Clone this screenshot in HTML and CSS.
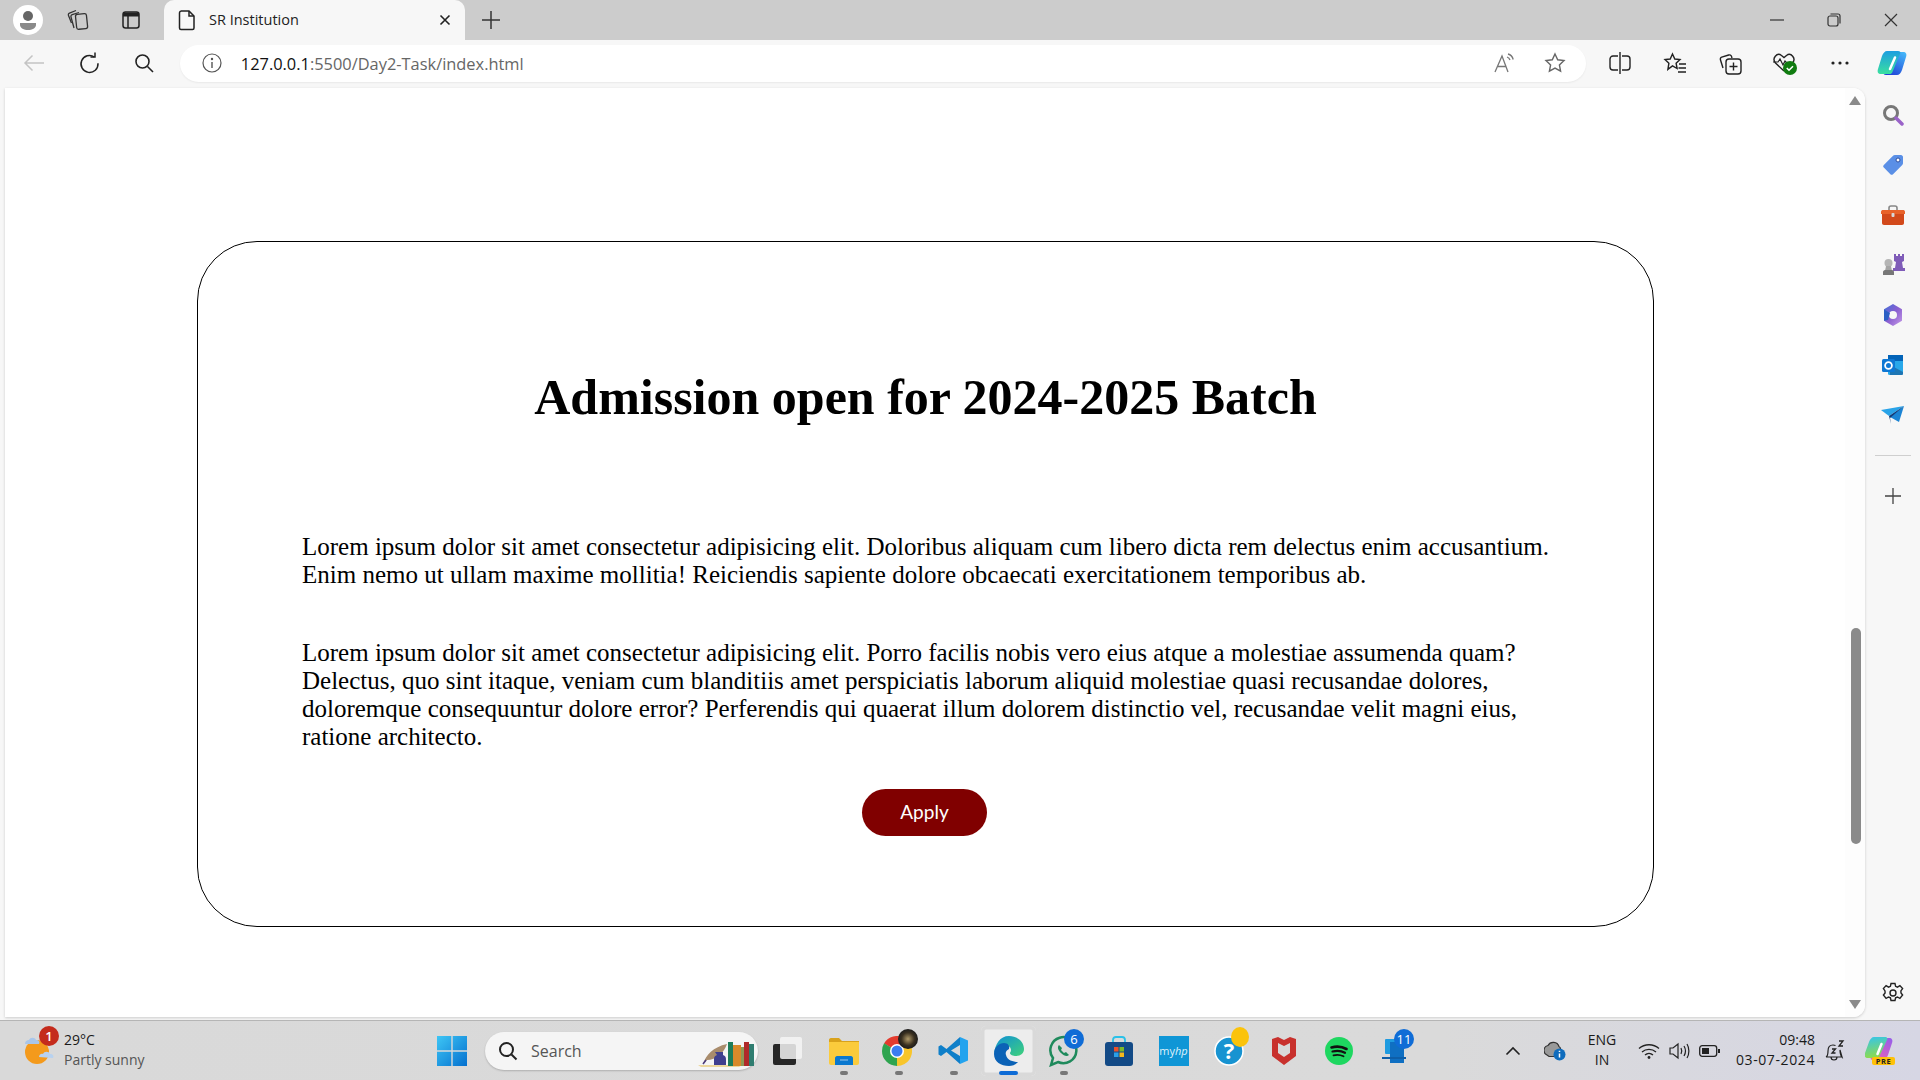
FILE: index.html
```html
<!DOCTYPE html>
<html lang="en">
<head>
  <meta charset="UTF-8">
  <title>SR Institution</title>
  <link rel="stylesheet" href="styles.css">
</head>
<body>
  <!-- title bar -->
  <div class="titlebar">
    <div class="tb-btn profile">
      <svg width="30" height="30" viewBox="0 0 30 30"><circle cx="15" cy="15" r="15" fill="#fff"/><circle cx="15" cy="11" r="5" fill="#666"/><path d="M7 18h16v2c0 3-4 5-8 5s-8-2-8-5z" fill="#8a8a8a"/></svg>
    </div>
    <div class="tb-btn">
      <svg width="24" height="24" viewBox="0 0 24 24" fill="none" stroke="#333" stroke-width="1.300"><rect x="10" y="6" width="11" height="15" rx="2" transform="rotate(-6 15 13)"/><path d="M8 20 5 9c-.3-1 .2-2 1.200-2.300L13 4.500"/><path d="M5.500 15 2.500 7.500c-.4-1 0-2 1-2.400L10 2.500"/></svg>
    </div>
    <div class="tb-btn">
      <svg width="20" height="20" viewBox="0 0 20 20" fill="none" stroke="#222" stroke-width="1.500"><rect x="2" y="2" width="16" height="16" rx="2.500"/><path d="M2 4.500h16" stroke-width="4"/><path d="M7 6v12"/></svg>
    </div>
    <div class="tab">
      <svg width="18" height="22" viewBox="0 0 18 22" fill="none" stroke="#222" stroke-width="1.500"><path d="M3 2h8l5 5v12a1.500 1.500 0 0 1-1.500 1.500h-11.500a1.500 1.500 0 0 1-1.500-1.500v-15a2 2 0 0 1 2-2z"/><path d="M11 2v5h5"/></svg>
      <span class="tab-title">SR Institution</span>
      <svg width="12" height="12" viewBox="0 0 12 12" stroke="#222" stroke-width="1.600"><path d="M1.500 1.500l9 9M10.500 1.500l-9 9"/></svg>
    </div>
    <div class="new-tab">
      <svg width="20" height="20" viewBox="0 0 20 20" stroke="#333" stroke-width="1.500"><path d="M10 1v18M1 10h18"/></svg>
    </div>
    <div class="win-controls">
      <div class="win-btn"><svg width="14" height="14" viewBox="0 0 14 14" stroke="#333" stroke-width="1.200"><path d="M0 7h14"/></svg></div>
      <div class="win-btn"><svg width="14" height="14" viewBox="0 0 14 14" fill="none" stroke="#333" stroke-width="1.200"><rect x="1" y="3" width="10" height="10" rx="2"/><path d="M3.500 1h7.500a2 2 0 0 1 2 2v7.500"/></svg></div>
      <div class="win-btn"><svg width="14" height="14" viewBox="0 0 14 14" stroke="#333" stroke-width="1.200"><path d="M1 1l12 12M13 1l-12 12"/></svg></div>
    </div>
  </div>

  <!-- address bar -->
  <div class="toolbar">
    <div class="nav-btn">
      <svg width="22" height="18" viewBox="0 0 22 18" fill="none" stroke="#c4c4c4" stroke-width="1.500"><path d="M21 9h-19M9.500 1.500 2 9l7.500 7.500"/></svg>
    </div>
    <div class="nav-btn">
      <svg class="reload" width="22" height="22" viewBox="0 0 22 22" fill="none" stroke="#222" stroke-width="1.500"><path d="M19 11.300A8.500 8.500 0 1 1 15.400 5"/><path d="M16 .5v4.500h-4.500"/></svg>
    </div>
    <div class="nav-btn">
      <svg width="20" height="20" viewBox="0 0 20 20" fill="none" stroke="#222" stroke-width="1.600"><circle cx="8.500" cy="8.500" r="6.500"/><path d="M13.500 13.500 19 19"/></svg>
    </div>
    <div class="url-bar">
      <svg class="url-info" width="20" height="20" viewBox="0 0 20 20" fill="none" stroke="#555" stroke-width="1.200"><circle cx="10" cy="10" r="9"/><path d="M10 9v6" stroke-width="1.400"/><circle cx="10" cy="6" r=".6" fill="#555"/></svg>
      <span class="url-text"><span class="url-host">127.0.0.1</span>:5500/Day2-Task/index.html</span>
      <div class="url-actions">
        <svg width="22" height="20" viewBox="0 0 22 20" fill="none" stroke="#777" stroke-width="1.300"><path d="M1 19 8 3l6 16M3.500 13.500h9"/><path d="M13 4c1.500 .5 2.500 1.500 3 3M14 1c2.500 .7 4.500 2.700 5.200 5.500"/></svg>
        <svg width="22" height="22" viewBox="0 0 22 22" fill="none" stroke="#666" stroke-width="1.400"><path d="m11 2 2.700 5.800 6.300.8-4.600 4.300 1.200 6.300-5.600-3.100-5.600 3.100 1.200-6.300-4.600-4.300 6.300-.8z"/></svg>
      </div>
    </div>
    <div class="tools">
      <div class="tool">
        <svg width="22" height="24" viewBox="0 0 22 24" fill="none" stroke="#222" stroke-width="1.400"><path d="M9 5h-5a3 3 0 0 0-3 3v8a3 3 0 0 0 3 3h5M13 5h5a3 3 0 0 1 3 3v8a3 3 0 0 1-3 3h-5M11 1v22"/></svg>
      </div>
      <div class="tool">
        <svg width="24" height="24" viewBox="0 0 24 24" fill="none" stroke="#222" stroke-width="1.400"><path d="m9.500 3 2.300 5 5.200.6-3.900 3.600 1 5.300-4.600-2.600-4.600 3.500 1-6.200-3.900-3.600 5.200-.6z"/><path d="M16 13h7M15.500 17h7.500M15 21h8"/></svg>
      </div>
      <div class="tool">
        <svg width="24" height="24" viewBox="0 0 24 24" fill="none" stroke="#222" stroke-width="1.400"><rect x="8" y="8" width="15" height="15" rx="3"/><path d="M15.500 11.500v8M11.500 15.500h8M5 17l-2.500-8c-.4-1.200 0-2.400 1.200-2.800l7-2.200c1.200-.4 2.400.2 2.800 1.400l.5 1.600"/></svg>
      </div>
      <div class="tool">
        <svg width="26" height="26" viewBox="0 0 26 26" fill="none"><path d="M12 21 3.500 13c-4-4.500 1.500-11 6-7.500L12 7.500l2.500-2c4.500-3.500 10 3 6 7.500" stroke="#222" stroke-width="1.400"/><path d="M1 12h5l2-3 3 6 2-4 2 2h3" stroke="#222" stroke-width="1.200"/><circle cx="18" cy="18" r="7" fill="#107c10"/><path d="m14.800 18 2.200 2.200 4-4" stroke="#fff" stroke-width="1.600"/></svg>
      </div>
      <div class="tool">
        <svg width="18" height="4" viewBox="0 0 18 4" fill="#222"><circle cx="2" cy="2" r="1.600"/><circle cx="9" cy="2" r="1.600"/><circle cx="16" cy="2" r="1.600"/></svg>
      </div>
      <div class="tool tool-copilot">
        <svg width="30" height="30" viewBox="0 0 30 30"><defs><linearGradient id="cpA" x1="0.3" y1="0" x2="0.3" y2="1"><stop offset="0" stop-color="#1c9ee0"/><stop offset="1" stop-color="#3ae0a0"/></linearGradient><linearGradient id="cpB" x1="0.8" y1="0" x2="0.2" y2="1"><stop offset="0" stop-color="#44b4f8"/><stop offset="1" stop-color="#1f3fd6"/></linearGradient></defs><path d="M20 27H9c-2 0-3-1-2-3l8-19c1-1 2-1 3-1h8c3 0 4 2 3 5l-4 13c-1 3-3 5-5 5z" fill="url(#cpB)"/><path d="M10 3h11c2 0 3 1 2 3l-8 19c-1 1-2 1-3 1H4c-3 0-4-2-3-5L5 8c1-3 3-5 5-5z" fill="url(#cpA)"/><path d="M18 9.500 13 21" stroke="#fff" stroke-width="2.500" stroke-linecap="round"/></svg>
      </div>
    </div>
  </div>

  <!-- viewport + edge sidebar -->
  <div class="main">
    <div class="viewport">
      <div class="page">
        <div class="card">
          <h1>Admission open for 2024-2025 Batch</h1>
          <p>Lorem ipsum dolor sit amet consectetur adipisicing elit. Doloribus aliquam cum libero dicta rem delectus enim accusantium. Enim nemo ut ullam maxime mollitia! Reiciendis sapiente dolore obcaecati exercitationem temporibus ab.</p>
          <p>Lorem ipsum dolor sit amet consectetur adipisicing elit. Porro facilis nobis vero eius atque a molestiae assumenda quam? Delectus, quo sint itaque, veniam cum blanditiis amet perspiciatis laborum aliquid molestiae quasi recusandae dolores, doloremque consequuntur dolore error? Perferendis qui quaerat illum dolorem distinctio vel, recusandae velit magni eius, ratione architecto.</p>
          <button class="apply-btn">Apply</button>
        </div>
      </div>
      <div class="scrollbar">
        <div class="arrow arrow-up"></div>
        <div class="thumb"></div>
        <div class="arrow arrow-down"></div>
      </div>
    </div>

    <div class="sidebar">
      <div class="side-icon">
        <svg width="22" height="22" viewBox="0 0 22 22" fill="none"><circle cx="9" cy="9" r="6.500" stroke="#777" stroke-width="3"/><path d="m14 14 6 6" stroke="#9a63c9" stroke-width="3.500" stroke-linecap="round"/></svg>
      </div>
      <div class="side-icon">
        <svg width="22" height="22" viewBox="0 0 22 22"><path d="M13 1h6c1 0 2 1 2 2v6c0 1-.4 1.600-1 2.200l-9 9c-.8.800-1.800.800-2.600 0l-6.600-6.600c-.8-.8-.8-1.800 0-2.600l9-9c.6-.6 1.200-1 2.200-1z" fill="#5a8fe6"/><circle cx="16" cy="6" r="2" fill="#fff" stroke="#2c4ea0" stroke-width="1"/></svg>
      </div>
      <div class="side-icon">
        <svg width="24" height="20" viewBox="0 0 24 20"><path d="M8 5V3c0-1 .6-2 2-2h4c1.400 0 2 1 2 2v2" fill="none" stroke="#888" stroke-width="1.600"/><path d="M2 5h20c1 0 2 .6 2 2v2H0V7c0-1.400 1-2 2-2z" fill="#e8622a"/><path d="M1 9h22v9c0 1-.8 2-2 2H3c-1.200 0-2-1-2-2z" fill="#d2491b"/><rect x="10.500" y="8" width="3" height="4" rx="1" fill="#d8d8d8"/></svg>
      </div>
      <div class="side-icon">
        <svg width="24" height="24" viewBox="0 0 24 24"><path d="M14 1h2v2h2V1h2v2h2V1h2v7l-2 1 1 6h2v3H13v-3h2l1-6-2-1z" fill="#7f5cb8" transform="translate(-1 0)"/><circle cx="7.500" cy="10" r="4" fill="#b5b5b5"/><path d="M5 13h5l1 5H4z" fill="#a5a5a5"/><path d="M2 19c0-1 1-2 2-2h7c1 0 2 1 2 2v3H2z" fill="#777"/></svg>
      </div>
      <div class="side-icon">
        <svg width="22" height="24" viewBox="0 0 22 24"><defs><linearGradient id="m3" x1="0" y1="0" x2="1" y2="1"><stop offset="0" stop-color="#3f6fd8"/><stop offset=".5" stop-color="#8a5fd0"/><stop offset="1" stop-color="#c79be8"/></linearGradient></defs><path d="M11 1 20 6.200V17.800L11 23 2 17.800V6.200z" fill="url(#m3)"/><circle cx="11" cy="12" r="4" fill="#f7f7f7"/><path d="M2 6.500 8 10 6 17 2 17.800z" fill="#2b5fc4"/></svg>
      </div>
      <div class="side-icon">
        <svg width="22" height="22" viewBox="0 0 22 22"><rect x="6" y="1" width="15" height="20" rx="1.500" fill="#28a8ea"/><path d="M6 1h15v6H6z" fill="#0364b8"/><path d="M8 11 21 18v2a1 1 0 0 1-1 1H8z" fill="#14447d" opacity=".5"/><rect x="0" y="5" width="13" height="13" rx="1.500" fill="#0f78d4"/><circle cx="6.500" cy="11.500" r="3.400" fill="none" stroke="#fff" stroke-width="1.800"/></svg>
      </div>
      <div class="side-icon">
        <svg width="24" height="20" viewBox="0 0 24 20"><path d="M0 5 23 1 8 11z" fill="#29a3e8"/><path d="M23 1 18 17 9 12z" fill="#1b84d4"/><path d="M8 11 23 1 9 13l1 6z" fill="#0e3a78"/></svg>
      </div>
      <div class="side-divider"></div>
      <div class="side-icon">
        <svg width="16" height="16" viewBox="0 0 16 16" stroke="#444" stroke-width="1.300"><path d="M8 0v16M0 8h16"/></svg>
      </div>
      <div class="side-icon side-gear">
        <svg width="22" height="22" viewBox="0 0 22 22" fill="none" stroke="#222" stroke-width="1.400"><circle cx="11" cy="11" r="3"/><path d="M9 1.500h4l.6 2.800 1.800.8 2.500-1.500 2.700 3-1.700 2.300.1 2 1.600 2.100-2.700 3.400-2.500-1.400-1.800.8-.6 2.700H9l-.6-2.700-1.800-.8-2.500 1.400-2.700-3.400 1.700-2.100-.1-2-1.600-2.300 2.700-3 2.500 1.500 1.800-.8z"/></svg>
      </div>
    </div>
  </div>

  <!-- windows taskbar -->
  <div class="taskbar">
    <div class="weather">
      <div class="weather-icon">
        <svg width="34" height="40" viewBox="0 0 34 40"><circle cx="13" cy="21" r="12" fill="#f49a1c"/><path d="M1 13c0-3 2-4 4-4 1-3 6-3 7 0 3 0 4 2 3 4z" fill="#a9c6ea"/><path d="M15 26c0-2 2-4 4-3 1-3 6-3 7 0 3 0 4 2 3 4z" fill="#b8d2f0"/></svg>
        <span class="weather-badge">1</span>
      </div>
      <div class="weather-text">
        <div class="weather-temp">29°C</div>
        <div class="weather-desc">Partly sunny</div>
      </div>
    </div>

    <div class="start">
      <svg width="30" height="30" viewBox="0 0 30 30"><defs><linearGradient id="win" x1="0" y1="0" x2="1" y2="1"><stop offset="0" stop-color="#3ec6f5"/><stop offset="1" stop-color="#0470cf"/></linearGradient></defs><path d="M0 0h14.300v14.300H0zM15.700 0H30v14.300H15.700zM0 15.700h14.300V30H0zM15.700 15.700H30V30H15.700z" fill="url(#win)"/></svg>
    </div>
    <div class="search-box">
      <svg width="20" height="20" viewBox="0 0 20 20" fill="none" stroke="#222" stroke-width="2"><circle cx="8.500" cy="8.500" r="6.500"/><path d="M13.500 13.500 18.500 18.500"/></svg>
      <span class="search-label">Search</span>
      <svg class="search-art" width="60" height="34" viewBox="0 0 60 34">
        <path d="M2 31h44l-3 2H5z" fill="#ecd79c"/>
        <path d="M7 30c3-9 10-17 24-20-3 9-11 16-20 16z" fill="#a98c6c"/>
        <path d="M7 30 10 26" stroke="#4a3a7a" stroke-width="1.500"/>
        <path d="M19 18h8v3c3 1 3 3 3 5v5H18v-5c0-2 0-4 3-5z" fill="#3f3f8f"/>
        <rect x="32" y="8" width="5" height="24" fill="#1e7d5a"/>
        <rect x="37" y="11" width="8" height="21" fill="#d98a2a"/>
        <rect x="45" y="13" width="3" height="19" fill="#8f9a55"/>
        <rect x="48" y="8" width="5" height="24" fill="#b02a2a"/>
        <rect x="53" y="10" width="5" height="22" fill="#2f7d70"/>
      </svg>
    </div>

    <div class="task-icons">
      <div class="task-icon task-view">
        <svg width="30" height="30" viewBox="0 0 30 30"><rect x="1" y="8" width="23" height="21" rx="2" fill="#262626"/><rect x="8" y="1" width="22" height="22" rx="2" fill="#f5f5f5" opacity=".85"/></svg>
      </div>
      <div class="task-icon running">
        <svg width="30" height="28" viewBox="0 0 30 28"><path d="M0 3c0-1 .6-2 2-2h8l3 3h17v4H0z" fill="#d9a21b"/><path d="M0 5h30v21c0 1-1 2-2 2H2c-1 0-2-1-2-2z" fill="#fbcb3c"/><path d="M6 21c0-1 1-2 2-2h14c1 0 2 1 2 2v7H6z" fill="#0a78cf"/><path d="M11 23h8" stroke="#fff" stroke-width="1" opacity=".6"/></svg>
      </div>
      <div class="task-icon running chrome">
        <svg width="30" height="30" viewBox="0 0 30 30" fill="none"><g stroke-width="9"><circle cx="15" cy="15" r="10.500" stroke="#e33b2e" stroke-dasharray="22 44" transform="rotate(-150 15 15)"/><circle cx="15" cy="15" r="10.500" stroke="#f8c52b" stroke-dasharray="22 44" transform="rotate(-30 15 15)"/><circle cx="15" cy="15" r="10.500" stroke="#2ea44f" stroke-dasharray="22 44" transform="rotate(90 15 15)"/></g><circle cx="15" cy="15" r="7" fill="#fff"/><circle cx="15" cy="15" r="5.500" fill="#3b7cf0"/></svg>
        <span class="avatar-dot"></span>
      </div>
      <div class="task-icon running">
        <svg width="31" height="29" viewBox="0 0 31 29"><path d="M22 1 8.500 13 3 9 .5 10.500v8L3 20l5.500-4L22 28v-8l-9-5.500L22 9z" fill="#0f7fc9"/><path d="M22 1l8 3.500v20L22 28z" fill="#23a3ee"/></svg>
      </div>
      <div class="task-icon active">
        <svg width="32" height="32" viewBox="0 0 32 32"><defs><linearGradient id="edge" x1="0" y1="0" x2="1" y2="1"><stop offset="0" stop-color="#0f8fd8"/><stop offset="1" stop-color="#3fd27a"/></linearGradient></defs><path d="M16 1c9 0 15 6 15 13 0 4-3 7-8 7-3 0-6-1-6-3 0-1 1-1 1-3 0-3-3-5-6-5-5 0-10 4-11 9C2 9 7 1 16 1z" fill="url(#edge)"/><path d="M1 19C1 12 6 8 11 8c4 0 6 3 5 6-2 1-4 3-3 6 1 5 7 7 12 7-3 3-6 4-9 4C8 31 1 27 1 19z" fill="#0b62b6"/></svg>
      </div>
      <div class="task-icon running">
        <svg width="32" height="32" viewBox="0 0 32 32" fill="none"><path d="M3 30l2-7A13 13 0 1 1 10 27z" stroke="#1f8a5c" stroke-width="2.500"/><path d="M11 10c-2 2-1 5 2 8s6 4 8 2l-3-3-2 1-3-3 1-2z" fill="#1f8a5c"/></svg>
        <span class="count-badge">6</span>
      </div>
      <div class="task-icon">
        <svg width="30" height="30" viewBox="0 0 30 30"><path d="M9 7V4c0-2 1-3 3-3h6c2 0 3 1 3 3v3" fill="none" stroke="#2ac1e8" stroke-width="1.800"/><rect x="1" y="6" width="28" height="24" rx="3" fill="#134a86"/><rect x="10" y="11" width="4.500" height="4.500" fill="#e8512a"/><rect x="15.500" y="11" width="4.500" height="4.500" fill="#7cb82a"/><rect x="10" y="16.500" width="4.500" height="4.500" fill="#2a9fe8"/><rect x="15.500" y="16.500" width="4.500" height="4.500" fill="#f5b81c"/></svg>
      </div>
      <div class="task-icon">
        <div class="myhp">my<i>hp</i></div>
      </div>
      <div class="task-icon">
        <svg width="30" height="30" viewBox="0 0 30 30"><circle cx="15" cy="15" r="14" fill="#1793d1" stroke="#fff" stroke-width="1.500"/><text x="15" y="23" text-anchor="middle" class="help-mark">?</text></svg>
        <span class="yellow-dot"></span>
      </div>
      <div class="task-icon">
        <svg width="26" height="30" viewBox="0 0 26 30"><path d="M1 3l6-2 6 3 6-3 6 2v17l-12 9-12-9z" fill="#c8312d"/><path d="M7 7l6 3 6-3v10l-6 4-6-4z" fill="#d9d9d9"/></svg>
      </div>
      <div class="task-icon">
        <svg width="28" height="28" viewBox="0 0 28 28" fill="none" stroke="#111" stroke-linecap="round"><circle cx="14" cy="14" r="14" fill="#1ed760" stroke="none"/><path d="M6.500 10.500c5-1.500 10.500-1 15 1.500" stroke-width="2.600"/><path d="M7.500 14.500c4.500-1.200 9-.7 12.500 1.300" stroke-width="2.200"/><path d="M8.500 18.300c3.500-.8 7-.5 10 1" stroke-width="1.800"/></svg>
      </div>
      <div class="task-icon">
        <svg width="30" height="30" viewBox="0 0 30 30"><rect x="6" y="3" width="19" height="15" rx="1" fill="#1e9be0"/><rect x="11" y="6" width="14" height="21" fill="#0f6fc2"/><path d="M3 21h24v2H3z" fill="#0e5ea8"/></svg>
        <span class="count-badge">11</span>
      </div>
    </div>

    <div class="tray">
      <svg class="tray-chevron" width="16" height="10" viewBox="0 0 16 10" fill="none" stroke="#222" stroke-width="1.600"><path d="M1.500 8.500 8 2l6.500 6.500"/></svg>
      <svg class="tray-cloud" width="22" height="20" viewBox="0 0 22 20"><path d="M3 14a5 5 0 0 1 1-9.500 6 6 0 0 1 11 1c2 1 2 4 1 6l-6 4H5z" fill="#999" stroke="#333" stroke-width="1.200"/><circle cx="15.500" cy="13.500" r="6" fill="#0f6cbd"/><path d="M15.500 12.500v4M15.500 9.800v1.200" stroke="#fff" stroke-width="1.500"/></svg>
      <div class="lang"><div>ENG</div><div>IN</div></div>
      <svg class="tray-wifi" width="22" height="18" viewBox="0 0 22 18" fill="none" stroke="#222" stroke-width="1.300"><path d="M1 6.500c5.500-5 14.500-5 20 0M4 10c4-3.500 10-3.500 14 0M7 13c2.300-2 5.700-2 8 0"/><circle cx="11" cy="15.500" r="1.400" fill="#222" stroke="none"/></svg>
      <svg class="tray-sound" width="22" height="18" viewBox="0 0 22 18" fill="none" stroke="#222" stroke-width="1.200"><path d="M1 6v6h3l5 4V2L4 6z"/><path d="M12 6c1 2 1 4 0 6M15 4c1.800 3 1.800 7 0 10M18 2c2.500 4 2.500 10 0 14"/></svg>
      <svg class="tray-battery" width="22" height="14" viewBox="0 0 22 14"><rect x=".7" y="1.700" width="17" height="10.600" rx="2.500" fill="none" stroke="#222" stroke-width="1.300"/><rect x="3" y="4" width="7" height="6" fill="#222"/><rect x="19" y="5" width="2" height="4" fill="#222"/></svg>
      <div class="clock"><div>09:48</div><div class="clock-date">03-07-2024</div></div>
      <svg class="tray-bell" width="22" height="24" viewBox="0 0 22 24" fill="none" stroke="#222" stroke-width="1.200"><path d="M2 18c2-1 2-3 2-6 0-4 2-6 5-6 1 0 2 .3 2.500 .5M16 11c0 3 0 5 2 7zM2 18h16M7 18c0 4 6 4 6 0"/><path d="M8 10h3.500l-3.500 4h3.500M15 2h4l-4 5h4" stroke-width="1.300"/></svg>
      <svg class="tray-copilot" width="30" height="30" viewBox="0 0 30 30"><defs><linearGradient id="cpC" x1="0.2" y1="0" x2="0.4" y2="1"><stop offset="0" stop-color="#36c5e8"/><stop offset="1" stop-color="#8fdc4a"/></linearGradient><linearGradient id="cpD" x1="0.8" y1="0" x2="0.2" y2="1"><stop offset="0" stop-color="#9a5fe8"/><stop offset="1" stop-color="#e85fb8"/></linearGradient></defs><path d="M18 24H8c-2 0-3-1-2-3L14 3c1-1 2-1 3-1h7c3 0 4 2 3 5l-4 12c-1 3-3 5-5 5z" fill="url(#cpD)"/><path d="M9 1h11c2 0 3 1 2 3l-8 17c-1 1-2 1-3 1H3c-3 0-4-2-3-5L4 6c1-3 3-5 5-5z" fill="url(#cpC)"/><path d="M16.500 8 12.500 18" stroke="#fff" stroke-width="2.500" stroke-linecap="round"/><rect x="7" y="21" width="23" height="8" rx="2" fill="#ffc107"/><text x="18.500" y="27.800" text-anchor="middle" class="pre-mark">PRE</text></svg>
    </div>
  </div>
</body>
</html>
```

FILE: styles.css
```css
* {
  box-sizing: border-box;
}

html,
body {
  margin: 0;
  height: 100%;
  overflow: hidden;
}

body {
  display: flex;
  flex-direction: column;
  width: 1920px;
  height: 1080px;
  background: #f7f7f7;
  font-family: "Open Sans", "Noto Sans", sans-serif;
  color: #1a1a1a;
}

svg {
  display: block;
  flex: none;
}

/* title bar */
.titlebar {
  display: flex;
  align-items: center;
  height: 40px;
  padding-left: 6px;
  background: #cccccc;
}

.tb-btn {
  display: flex;
  align-items: center;
  justify-content: center;
  width: 44px;
  margin-right: 9px;
}

.profile {
  margin-right: 6px;
}

.tab {
  display: flex;
  align-items: center;
  align-self: stretch;
  width: 301px;
  margin-left: 2px;
  padding: 0 14px;
  background: #f7f7f7;
  border-radius: 10px 10px 0 0;
}

.tab-title {
  flex: 1;
  margin-left: 13px;
  margin-bottom: 2px;
  font-size: 14.500px;
  color: #222;
}

.new-tab {
  margin-left: 16px;
}

.win-controls {
  display: flex;
  margin-left: auto;
  padding-right: 1px;
}

.win-btn {
  display: flex;
  justify-content: center;
  width: 57px;
}

/* address bar */
.toolbar {
  display: flex;
  align-items: center;
  height: 48px;
  padding-left: 7px;
  padding-bottom: 2px;
}

.nav-btn {
  display: flex;
  justify-content: center;
  width: 55px;
}

.reload {
  margin-left: 2px;
}

.url-bar {
  display: flex;
  align-items: center;
  width: 1408px;
  height: 37px;
  margin-left: 8px;
  padding: 0 20px 0 22px;
  background: #fff;
  border-radius: 19px;
  box-shadow: 0 1px 2px rgba(0, 0, 0, 0.06);
}

.url-text {
  flex: 1;
  margin-left: 19px;
  font-size: 16.400px;
  color: #666;
}

.url-host {
  color: #111;
}

.url-actions {
  display: flex;
  align-items: center;
  gap: 28px;
}

.tools {
  display: flex;
  align-items: center;
  margin-left: 7px;
}

.tool {
  display: flex;
  justify-content: center;
  width: 55px;
}

.tool-copilot {
  margin-left: -3px;
}

/* page */
.main {
  display: flex;
  height: 932px;
}

.viewport {
  display: flex;
  width: 1860px;
  height: 929px;
  margin-left: 5px;
  background: #fff;
  border-radius: 0 12px 12px 0;
  box-shadow: 0 1px 3px rgba(0, 0, 0, 0.18);
}

.page {
  flex: 1;
  padding-top: 153px;
  padding-left: 1px;
}

.card {
  width: 1457px;
  height: 686px;
  margin: 0 auto;
  padding: 0 80px;
  border: 1.500px solid #000;
  border-radius: 60px;
  text-align: center;
}

h1 {
  margin: 128px 0 108px;
  font-family: "Liberation Serif", "Times New Roman", serif;
  font-size: 50px;
  line-height: 55px;
  font-weight: bold;
  color: #000;
}

.card p {
  margin: 0 0 50px;
  padding-left: 24px;
  font-family: "Liberation Serif", "Times New Roman", serif;
  font-size: 25px;
  line-height: 28px;
  text-align: left;
  color: #000;
}

.card p:last-of-type {
  margin-bottom: 38px;
}

.apply-btn {
  width: 125px;
  height: 47px;
  margin-right: 2px;
  padding-bottom: 4px;
  border: none;
  border-radius: 24px;
  background: #800000;
  font-family: Lato, "Open Sans", sans-serif;
  font-size: 19px;
  color: #fff;
}

.scrollbar {
  position: relative;
  display: flex;
  flex-direction: column;
  justify-content: space-between;
  align-items: center;
  width: 20px;
  padding: 8px 0;
  background: #fdfdfd;
  border-radius: 0 12px 12px 0;
}

.arrow {
  width: 0;
  height: 0;
  border-left: 6px solid transparent;
  border-right: 6px solid transparent;
}

.arrow-up {
  border-bottom: 9px solid #8a8a8a;
}

.arrow-down {
  border-top: 9px solid #8a8a8a;
}

.thumb {
  position: absolute;
  top: 540px;
  left: 6px;
  width: 10px;
  height: 216px;
  background: #8a8a8a;
  border-radius: 5px;
}

/* edge sidebar */
.sidebar {
  display: flex;
  flex-direction: column;
  align-items: center;
  width: 55px;
  padding-top: 2px;
}

.side-icon {
  display: flex;
  align-items: center;
  justify-content: center;
  height: 50px;
  width: 100%;
  flex: none;
}

.side-divider {
  width: 36px;
  height: 1px;
  margin: 15px 0;
  background: #cfcfcf;
}

.side-gear {
  margin-top: auto;
  margin-bottom: 2px;
}

/* taskbar */
.taskbar {
  display: flex;
  align-items: center;
  height: 60px;
  background: linear-gradient(90deg, #d9d9d9 0%, #dadada 75%, #d6d6e4 100%);
  border-top: 1px solid #b5b5b5;
}

.weather {
  display: flex;
  align-items: center;
  width: 437px;
  padding-left: 24px;
}

.weather-icon {
  position: relative;
  width: 40px;
}

.weather-badge {
  position: absolute;
  top: -5px;
  left: 15px;
  width: 20px;
  height: 20px;
  border-radius: 50%;
  background: #c42b1c;
  font-size: 13px;
  line-height: 20px;
  font-weight: 600;
  text-align: center;
  color: #fff;
}

.weather-text {
  margin-bottom: 2px;
  font-size: 14px;
  line-height: 20px;
}

.weather-desc {
  color: #555;
}

.start {
  width: 48px;
}

.search-box {
  display: flex;
  align-items: center;
  width: 273px;
  height: 38px;
  padding: 0 2px 0 13px;
  background: #f5f5f5;
  border-radius: 19px;
  box-shadow: 0 1px 2px rgba(0, 0, 0, 0.2);
}

.search-label {
  flex: 1;
  margin-left: 13px;
  font-size: 16px;
  color: #555;
}

.task-icons {
  display: flex;
}

.task-icon {
  position: relative;
  display: flex;
  align-items: center;
  justify-content: center;
  width: 55px;
  height: 50px;
}

.task-view {
  width: 58px;
}

.chrome svg {
  margin-right: 3px;
}

.running::after {
  content: "";
  position: absolute;
  bottom: 1px;
  left: 24px;
  width: 8px;
  height: 4px;
  background: #777;
  border-radius: 2px;
}

.active {
  background: #ededed;
  border-radius: 5px;
  box-shadow: inset 0 0 0 3.500px #d9d9d9;
}

.active::after {
  content: "";
  position: absolute;
  bottom: 1px;
  left: 18px;
  width: 19px;
  height: 4px;
  background: #0f6cd6;
  border-radius: 2px;
}

.avatar-dot {
  position: absolute;
  top: 3px;
  right: 8px;
  width: 20px;
  height: 20px;
  border-radius: 50%;
  background: radial-gradient(circle, #b09a6a 0%, #3a3020 45%, #1c1c1c 70%);
}

.count-badge {
  position: absolute;
  top: 3px;
  right: 7px;
  width: 20px;
  height: 20px;
  border-radius: 50%;
  background: #0f6cd6;
  font-size: 13px;
  line-height: 20px;
  text-align: center;
  color: #fff;
}

.yellow-dot {
  position: absolute;
  top: 1px;
  right: 7px;
  width: 18px;
  height: 20px;
  border-radius: 50%;
  background: #fbc30b;
}

.myhp {
  width: 30px;
  height: 30px;
  background: #0f96d6;
  font-size: 11px;
  line-height: 30px;
  text-align: center;
  color: #dff2fb;
}

.help-mark {
  font-family: "Open Sans", sans-serif;
  font-size: 22px;
  font-weight: bold;
  fill: #fff;
}

.pre-mark {
  font-family: "Open Sans", sans-serif;
  font-size: 7.500px;
  font-weight: bold;
  letter-spacing: 0.5px;
  fill: #222;
}

.tray {
  display: flex;
  align-items: center;
  flex: 1;
  font-size: 14px;
  line-height: 20px;
}

.tray-chevron {
  margin-left: 84px;
}

.tray-cloud {
  margin-left: 23px;
}

.lang {
  width: 40px;
  margin-left: 16px;
  margin-bottom: 2px;
  text-align: center;
}

.tray-wifi {
  margin-left: 16px;
}

.tray-sound {
  margin-left: 9px;
}

.tray-battery {
  margin-left: 8px;
}

.clock {
  width: 94px;
  margin-left: 0;
  margin-bottom: 2px;
  text-align: right;
}

.clock-date {
  letter-spacing: 0.6px;
}

.tray-bell {
  margin-left: 9px;
}

.tray-copilot {
  margin-left: 19px;
}
```
